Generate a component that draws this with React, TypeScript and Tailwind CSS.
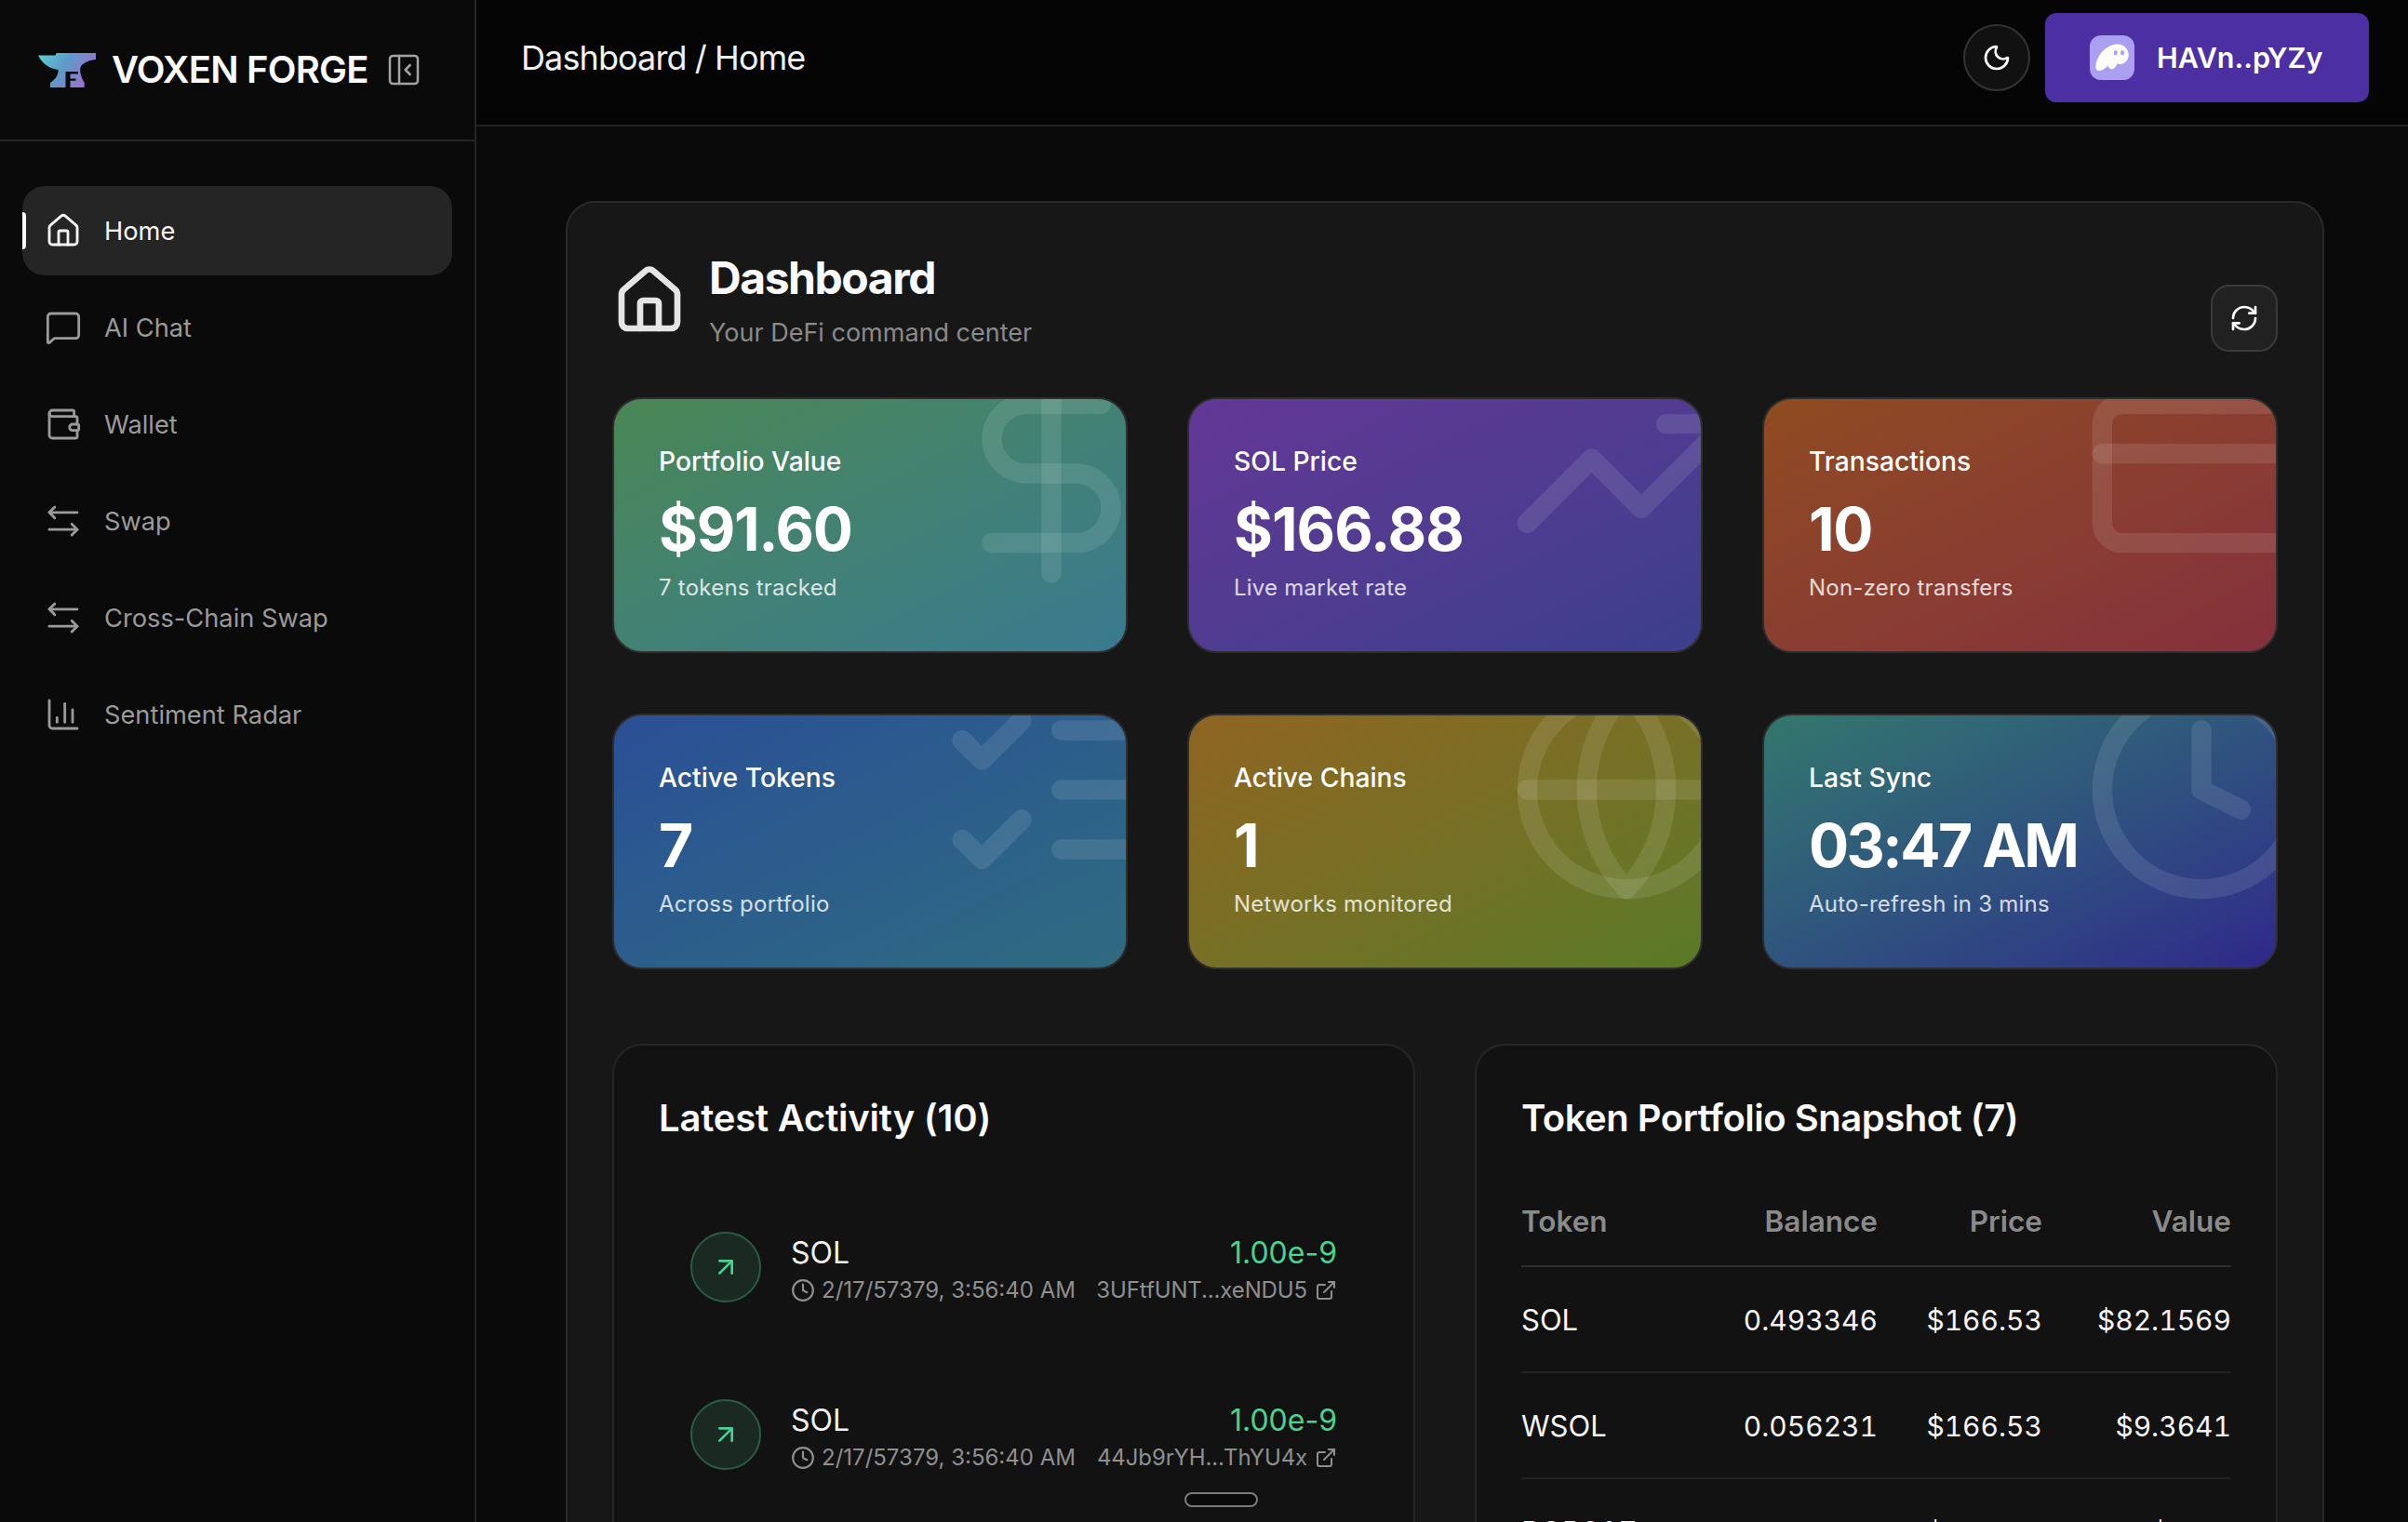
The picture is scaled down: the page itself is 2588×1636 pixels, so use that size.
import React from 'react';
import {
  ArrowUpRight,
  ChartColumn,
  Clock,
  CreditCard,
  DollarSign,
  ExternalLink,
  Globe,
  House,
  MessageSquare,
  Moon,
  PanelLeftClose,
  RefreshCw,
  TrendingUp,
  Wallet,
} from 'lucide-react';

const SwapIcon = ({ className }: { className?: string }) => (
  <svg viewBox="0 0 24 24" fill="none" stroke="currentColor" strokeWidth={1.7} strokeLinecap="round" strokeLinejoin="round" className={className}>
    <path d="M6.5 3 3 6.5 6.5 10" />
    <path d="M3 6.5h18" />
    <path d="M17.5 14l3.5 3.5-3.5 3.5" />
    <path d="M21 17.5H3" />
  </svg>
);

const ListIcon = ({ className }: { className?: string }) => (
  <svg viewBox="0 0 24 24" fill="none" stroke="currentColor" strokeWidth={2} strokeLinecap="round" strokeLinejoin="round" className={className}>
    <path d="m3 17 2 2 4-4" />
    <path d="m3 7 2 2 4-4" />
    <path d="M13 6h8" />
    <path d="M13 12h8" />
    <path d="M13 18h8" />
  </svg>
);

const AnvilLogo = () => (
  <svg viewBox="41 57 62 38" className="h-[38px] w-[62px] shrink-0">
    <defs>
      <linearGradient id="anvil" x1="0" y1="0" x2="1" y2="0.4">
        <stop offset="0" stopColor="#5fd0cf" />
        <stop offset="0.5" stopColor="#5c9cc8" />
        <stop offset="1" stopColor="#9a72cc" />
      </linearGradient>
    </defs>
    <path
      d="M41 60.5H59.5L60.5 58H103V65C97 65.5 90 67.5 86.5 73C85.5 78 87 84 90.7 90V95H54V90C60 86 63 81 62.5 76C56 75.5 46 71 41 60.5Z"
      fill="url(#anvil)"
    />
    <path d="M70.5 95V78H84V80.5H75.5V85.5H81.5V87.8H75.5V95Z" fill="#0a0a0a" />
  </svg>
);

const PhantomIcon = () => (
  <span className="flex size-12 items-center justify-center rounded-xl bg-[#ab9ff2]">
    <svg viewBox="0 0 48 48" className="size-12">
      <path
        d="M10 38C7 38 6 35 6.5 32C8 20 19 9.5 30 9.5C37 9.5 41.7 15 41.7 21C41.7 27 37 31 33 31C31 31 30 30.5 29.5 30.5C28.5 33 26.5 36.2 24 36.2C21.5 36.2 20 34.5 19.5 32.5C17 35 13.5 38 10 38Z"
        fill="#fffdf8"
      />
      <ellipse cx="27.7" cy="18.7" rx="2" ry="2.6" fill="#ab9ff2" />
      <ellipse cx="35" cy="18.7" rx="2" ry="2.6" fill="#ab9ff2" />
    </svg>
  </span>
);

const navItems = [
  { label: 'Home', icon: House, active: true },
  { label: 'AI Chat', icon: MessageSquare },
  { label: 'Wallet', icon: Wallet },
  { label: 'Swap', icon: SwapIcon },
  { label: 'Cross-Chain Swap', icon: SwapIcon },
  { label: 'Sentiment Radar', icon: ChartColumn },
];

const statCards = [
  { label: 'Portfolio Value', value: '$91.60', sub: '7 tokens tracked', icon: DollarSign, bg: 'bg-gradient-to-br from-[#4b8753] to-[#3a7a90]', tracking: 'tracking-[-0.02em]' },
  { label: 'SOL Price', value: '$166.88', sub: 'Live market rate', icon: TrendingUp, bg: 'bg-gradient-to-br from-[#633796] to-[#3b3f8c]', tracking: 'tracking-[-0.015em]' },
  { label: 'Transactions', value: '10', sub: 'Non-zero transfers', icon: CreditCard, bg: 'bg-gradient-to-br from-[#8f4b1f] to-[#85303c]', tracking: 'tracking-[-0.02em]' },
  { label: 'Active Tokens', value: '7', sub: 'Across portfolio', icon: ListIcon, bg: 'bg-gradient-to-br from-[#2b4f96] to-[#2f6b80]', tracking: 'tracking-[-0.02em]' },
  { label: 'Active Chains', value: '1', sub: 'Networks monitored', icon: Globe, bg: 'bg-gradient-to-br from-[#8f6422] to-[#587a28]', tracking: 'tracking-[-0.02em]' },
  { label: 'Last Sync', value: '03:47 AM', sub: 'Auto-refresh in 3 mins', icon: Clock, bg: 'bg-gradient-to-br from-[#33776c] to-[#30268a]', tracking: 'tracking-[-0.04em]' },
];

const activity = [
  { token: 'SOL', amount: '1.00e-9', date: '2/17/57379, 3:56:40 AM', sig: '3UFtfUNT...xeNDU5' },
  { token: 'SOL', amount: '1.00e-9', date: '2/17/57379, 3:56:40 AM', sig: '44Jb9rYH...ThYU4x' },
];

const tokens = [
  { token: 'SOL', balance: '0.493346', price: '$166.53', value: '$82.1569' },
  { token: 'WSOL', balance: '0.056231', price: '$166.53', value: '$9.3641' },
  { token: 'BOB217', balance: '0.007900', price: '$0.1937', value: '$0.84' },
];

const Sidebar = () => (
  <aside className="flex h-full w-[512px] shrink-0 flex-col border-r-2 border-[#262626] bg-[#0a0a0a]">
    <div className="flex h-[152px] items-center border-b-2 border-[#262626] pl-[41px]">
      <AnvilLogo />
      <span className="ml-[17px] text-[40px] font-semibold tracking-[-0.02em] whitespace-nowrap text-[#fafafa]">VOXEN FORGE</span>
      <PanelLeftClose size={40} strokeWidth={1.5} className="ml-[18px] text-[#a3a3a3]" />
    </div>
    <nav className="flex flex-col gap-2 px-6 pt-12">
      {navItems.map((item) => (
        <div
          key={item.label}
          className={`relative flex h-24 items-center gap-6 rounded-3xl px-6 text-[27.25px] ${
            item.active ? 'bg-[#252525] text-[#f5f5f5]' : 'text-[#9a9a9a]'
          }`}
        >
          {item.active && <span className="absolute top-7 left-0 h-10 w-1 rounded-r bg-white" />}
          <item.icon className="size-10 shrink-0" strokeWidth={1.7} />
          <span className="pt-[2px]">{item.label}</span>
        </div>
      ))}
    </nav>
  </aside>
);

const TopBar = () => (
  <header className="flex h-[136px] shrink-0 items-center justify-between border-b-2 border-[#222222] bg-[#050505] pr-[42px] pb-[10px] pl-12">
    <h1 className="text-[36px] tracking-[-0.025em] text-[#f0f0f0]">Dashboard / Home</h1>
    <div className="flex items-center gap-4">
      <button className="flex size-[72px] items-center justify-center rounded-full border-2 border-[#333333] bg-[#111111] text-white">
        <Moon size={32} strokeWidth={2} />
      </button>
      <button className="flex h-24 w-[348px] items-center gap-6 rounded-xl bg-[#4c2fa2] px-12 text-[30.5px] font-semibold text-white">
        <PhantomIcon />
        <span>HAVn..pYZy</span>
      </button>
    </div>
  </header>
);

const StatCard = ({ card }: { card: (typeof statCards)[number] }) => (
  <div className={`relative h-[275px] overflow-hidden rounded-[32px] border-2 border-[#2e2e2e] px-12 pt-[49px] ${card.bg}`}>
    <card.icon className="absolute -top-12 -right-12 size-64 text-white/10" strokeWidth={2} />
    <div className="text-[28.25px] leading-9 font-medium text-white">{card.label}</div>
    <div className={`mt-[19px] text-[64px] leading-[72px] font-bold text-white ${card.tracking}`}>{card.value}</div>
    <div className="mt-[11px] text-[24px] leading-8 tracking-[0.01em] text-white/80">{card.sub}</div>
  </div>
);

const ActivityRow = ({ row }: { row: (typeof activity)[number] }) => (
  <div className="flex h-[180px] items-center gap-8 px-[34px]">
    <div className="flex size-[76px] shrink-0 items-center justify-center rounded-full border-2 border-[#2a5c45] bg-[#1a2a22] text-[#4ad295]">
      <ArrowUpRight size={32} strokeWidth={2} />
    </div>
    <div className="min-w-0 flex-1 pt-[6px]">
      <div className="flex items-center justify-between text-[32px] leading-10">
        <span className="text-[#f0f0f0]">{row.token}</span>
        <span className="text-[#4ad295]">{row.amount}</span>
      </div>
      <div className="mt-1 flex items-center justify-between text-[24px] leading-8 text-[#8f8f8f]">
        <span className="flex items-center gap-[7px]">
          <Clock size={26} strokeWidth={2} />
          {row.date}
        </span>
        <span className="flex items-center gap-2 tracking-[-0.005em]">
          {row.sig}
          <ExternalLink size={24} strokeWidth={2} />
        </span>
      </div>
    </div>
  </div>
);

const Dashboard = () => (
  <section className="rounded-[32px] border-2 border-[#2a2a2a] bg-[#171717] px-12 pt-[51px] pb-12">
    <div className="flex items-end justify-between">
      <div className="flex items-center gap-6">
        <House size={80} strokeWidth={2} className="text-[#e5e5e5]" />
        <div>
          <h2 className="text-[48px] leading-[60px] font-bold tracking-[-0.03em] text-[#fafafa]">Dashboard</h2>
          <p className="mt-[11px] text-[27px] leading-9 text-[#8a8a8a]">Your DeFi command center</p>
        </div>
      </div>
      <button className="relative top-[2px] flex size-[72px] items-center justify-center rounded-[20px] border-2 border-[#3a3a3a] bg-[#212121] text-white">
        <RefreshCw size={32} strokeWidth={2} />
      </button>
    </div>
    <div className="mt-[51px] grid grid-cols-3 gap-x-16 gap-y-[65px]">
      {statCards.map((card) => (
        <StatCard key={card.label} card={card} />
      ))}
    </div>
    <div className="mt-20 grid grid-cols-2 gap-16">
      <div className="rounded-[32px] border-2 border-[#262626] bg-[#121212] px-12 pt-[50px] pb-12">
        <h3 className="text-[40px] leading-[56px] font-semibold tracking-[-0.005em] text-[#fafafa]">Latest Activity (10)</h3>
        <div className="mt-[42px]">
          {activity.map((row) => (
            <ActivityRow key={row.sig} row={row} />
          ))}
        </div>
      </div>
      <div className="rounded-[32px] border-2 border-[#262626] bg-[#121212] px-12 pt-[50px] pb-12">
        <h3 className="text-[40px] leading-[56px] font-semibold tracking-[-0.012em] text-[#fafafa]">Token Portfolio Snapshot (7)</h3>
        <table className="mt-[35px] w-full table-fixed text-[30px] tabular-nums">
          <thead>
            <tr className="h-24 border-b-2 border-[#2e2e2e] text-[31.5px] text-[#8a8a8a]">
              <th className="w-[180px] text-left font-semibold">Token</th>
              <th className="text-right font-semibold">Balance</th>
              <th className="w-[177px] text-right font-semibold">Price</th>
              <th className="w-[203px] text-right font-semibold">Value</th>
            </tr>
          </thead>
          <tbody className="text-[#f5f5f5]">
            {tokens.map((t) => (
              <tr key={t.token} className="h-[114px] border-b-2 border-[#222222]">
                <td className="pt-[3px] text-[31px]">{t.token}</td>
                <td className="pt-[3px] text-right">{t.balance}</td>
                <td className="pt-[3px] text-right">{t.price}</td>
                <td className="pt-[3px] text-right">{t.value}</td>
              </tr>
            ))}
          </tbody>
        </table>
      </div>
    </div>
  </section>
);

export default function App() {
  return (
    <div className="relative flex h-screen overflow-hidden bg-[#0a0a0a] font-['Inter',sans-serif]">
      <Sidebar />
      <div className="flex min-w-0 flex-1 flex-col">
        <TopBar />
        <main className="min-h-0 flex-1 overflow-hidden pt-20 pr-[90px] pl-[96px]">
          <Dashboard />
        </main>
      </div>
      <div className="absolute top-[1604px] left-[1273px] h-4 w-[79px] rounded-full border-2 border-[#7a7a7a] bg-[#0a0a0a]" />
    </div>
  );
}
